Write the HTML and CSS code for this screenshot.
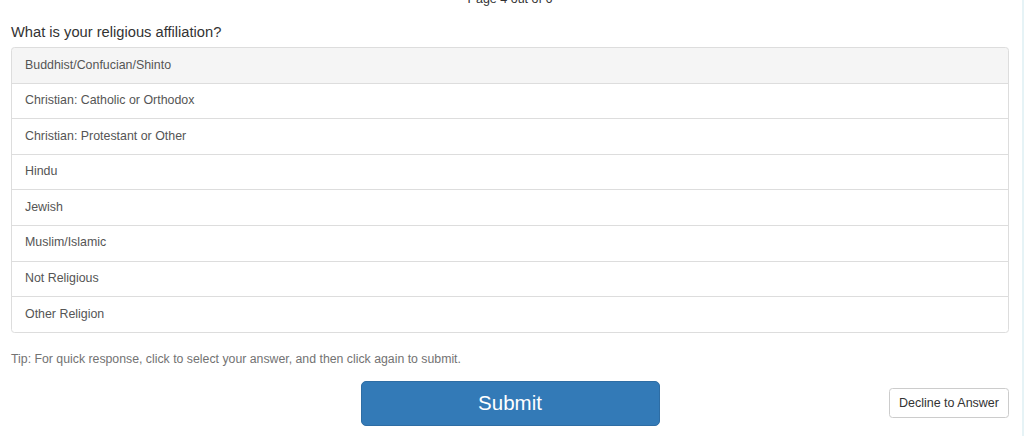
FILE: index.html
```html
<!DOCTYPE html>
<html lang="en">
<head>
  <meta charset="UTF-8">
  <meta name="viewport" content="width=device-width, initial-scale=1.0">
  <title>Survey</title>
  <link rel="stylesheet" href="styles.css">
</head>
<body>
  <div class="page">
    <div class="survey">
      <div class="page-count">Page 4 out of 6</div>

      <h2 class="question">What is your religious affiliation?</h2>

      <div class="list-group">
        <a class="list-item active">Buddhist/Confucian/Shinto</a>
        <a class="list-item">Christian: Catholic or Orthodox</a>
        <a class="list-item">Christian: Protestant or Other</a>
        <a class="list-item">Hindu</a>
        <a class="list-item">Jewish</a>
        <a class="list-item">Muslim/Islamic</a>
        <a class="list-item">Not Religious</a>
        <a class="list-item">Other Religion</a>
      </div>

      <p class="tip">Tip: For quick response, click to select your answer, and then click again to submit.</p>

      <div class="actions">
        <button class="btn-submit">Submit</button>
        <button class="btn-decline">Decline to Answer</button>
      </div>
    </div>
    <div class="edge"></div>
  </div>
</body>
</html>
```

FILE: styles.css
```css
body {
  font-family: "Liberation Sans", Arial, sans-serif;
  background-color: #fff;
  color: #333;
  margin: 0;
  padding: 0;
  overflow: hidden;
}
.page {
  display: flex;
  height: 436px;
}
.survey {
  flex: 1;
  padding: 0 13px 0 11px;
}
.edge {
  width: 2px;
  background-color: #e6f3f6;
}
.page-count {
  text-align: center;
  font-size: 12.5px;
  line-height: 18px;
  margin-top: -10px;
  color: #333;
}
.question {
  font-size: 14.7px;
  font-weight: normal;
  line-height: 20px;
  margin: 14px 0 5px;
}
.list-group {
  display: flex;
  flex-direction: column;
}
.list-item {
  display: block;
  font-size: 12.4px;
  line-height: 17.6px;
  padding: 8.5px 13px;
  border: 1px solid #ddd;
  margin-bottom: -1px;
  background-color: #fff;
  color: #555;
  cursor: pointer;
}
.list-item:first-child {
  border-top-left-radius: 3.5px;
  border-top-right-radius: 3.5px;
}
.list-item:last-child {
  margin-bottom: 0;
  border-bottom-left-radius: 3.5px;
  border-bottom-right-radius: 3.5px;
}
.list-item.active {
  background-color: #f5f5f5;
}
.tip {
  font-size: 12.3px;
  line-height: 17px;
  color: #737373;
  margin: 18px 0 13px;
}
.actions {
  display: grid;
  grid-template-columns: 1fr auto 1fr;
  align-items: center;
}
.btn-submit {
  grid-column: 2;
  width: 299px;
  height: 45px;
  font-family: inherit;
  font-size: 20.5px;
  color: #fff;
  background-color: #337ab7;
  border: 1px solid #2e6da4;
  border-radius: 5px;
  cursor: pointer;
}
.btn-decline {
  grid-column: 3;
  justify-self: end;
  height: 30px;
  padding: 0 9px;
  font-family: inherit;
  font-size: 12.5px;
  color: #333;
  background-color: #fff;
  border: 1px solid #ccc;
  border-radius: 3.5px;
  cursor: pointer;
}
```
